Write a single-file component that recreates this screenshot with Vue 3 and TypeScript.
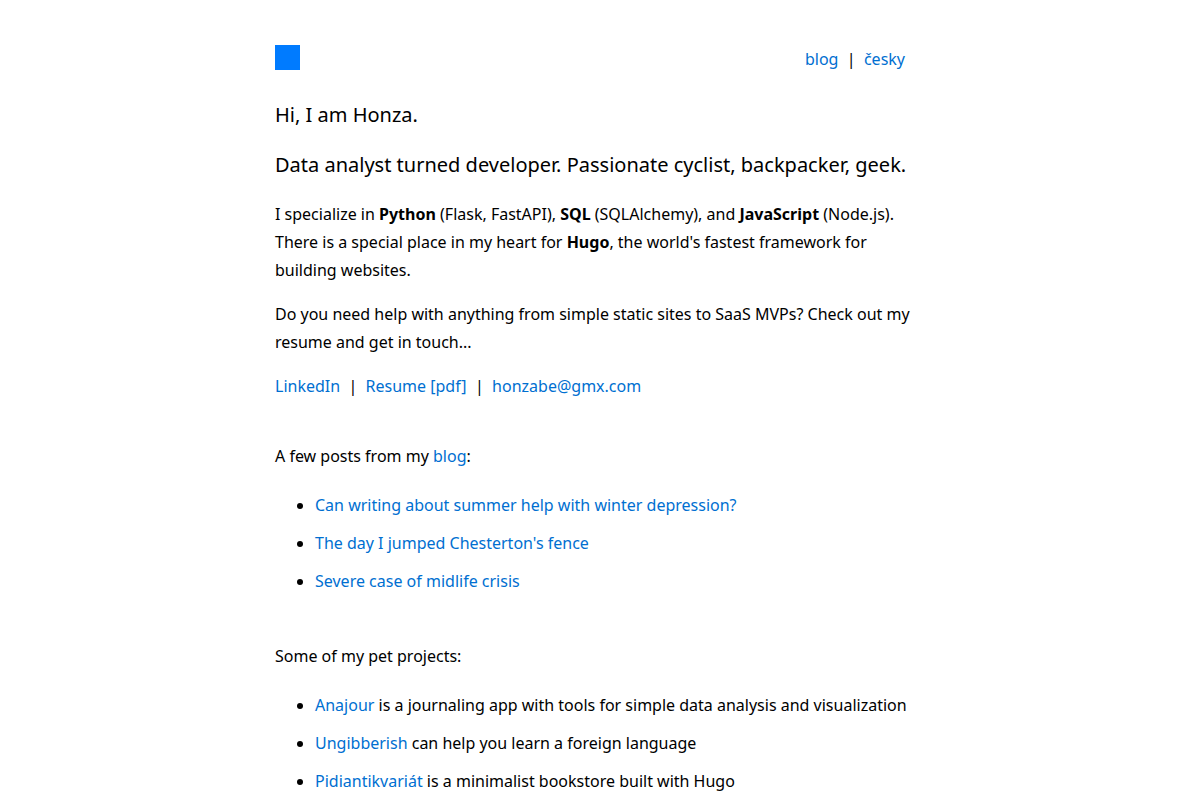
<script setup lang="ts">
interface Item {
  title: string
  href: string
  text?: string
}

const posts: Item[] = [
  { title: 'Can writing about summer help with winter depression?', href: '#summer' },
  { title: "The day I jumped Chesterton's fence", href: '#fence' },
  { title: 'Severe case of midlife crisis', href: '#midlife' },
]

const projects: Item[] = [
  { title: 'Anajour', href: '#anajour', text: 'is a journaling app with tools for simple data analysis and visualization' },
  { title: 'Ungibberish', href: '#ungibberish', text: 'can help you learn a foreign language' },
  { title: 'Pidiantikvariát', href: '#pidiantikvariat', text: 'is a minimalist bookstore built with Hugo' },
]
</script>

<template>
  <div class="page">
    <header class="top">
      <a class="logo" href="#home" aria-label="Home"></a>
      <nav>
        <a href="#blog">blog</a> &nbsp;|&nbsp; <a href="#cs">česky</a>
      </nav>
    </header>
    <main>
      <p class="lead">Hi, I am Honza.</p>
      <p class="lead">Data analyst turned developer. Passionate cyclist, backpacker, geek.</p>
      <p>
        I specialize in <strong>Python</strong> (Flask, FastAPI), <strong>SQL</strong> (SQLAlchemy), and
        <strong>JavaScript</strong> (Node.js). There is a special place in my heart for <strong>Hugo</strong>, the
        world's fastest framework for building websites.
      </p>
      <p>
        Do you need help with anything from simple static sites to SaaS MVPs? Check out my resume and get in touch...
      </p>
      <p>
        <a href="#linkedin">LinkedIn</a> &nbsp;|&nbsp; <a href="#resume">Resume [pdf]</a> &nbsp;|&nbsp;
        <a href="mailto:honzabe@gmx.com">honzabe@gmx.com</a>
      </p>
      <section>
        <p>A few posts from my <a href="#blog">blog</a>:</p>
        <ul>
          <li v-for="post in posts" :key="post.href"><a :href="post.href">{{ post.title }}</a></li>
        </ul>
      </section>
      <section>
        <p>Some of my pet projects:</p>
        <ul>
          <li v-for="project in projects" :key="project.href">
            <a :href="project.href">{{ project.title }}</a> {{ project.text }}
          </li>
        </ul>
      </section>
    </main>
  </div>
</template>

<style>
body {
  margin: 0;
  background: #fff;
}
</style>

<style scoped>
.page {
  box-sizing: border-box;
  max-width: 690px;
  margin: 0 auto;
  padding: 45px 20px 0;
  color: #000;
  font: 16px/28px "Noto Sans", sans-serif;
}

a {
  color: #006fd1;
  text-decoration: none;
}

.top {
  display: flex;
  justify-content: space-between;
  margin-bottom: 27px;
  padding-right: 20px;
}

.logo {
  width: 25px;
  height: 25px;
  background: #007bff;
}

p {
  margin: 0 0 16px;
}

.lead {
  margin-bottom: 20px;
  font-size: 20px;
  line-height: 30px;
}

section {
  padding-top: 26px;
}

ul {
  margin: 0;
  padding: 5px 0 11px 40px;
}

li {
  margin-bottom: 10px;
}
</style>
